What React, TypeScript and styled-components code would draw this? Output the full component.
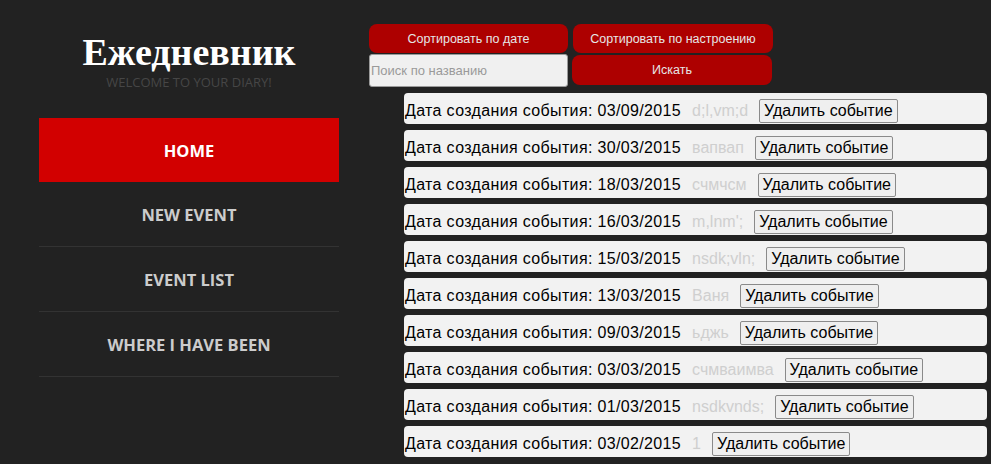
import React from "react";
import styled, { createGlobalStyle } from "styled-components";

const Global = createGlobalStyle`
  html, body { margin: 0; padding: 0; background: #222222; }
  body { font-family: "Liberation Sans", Arial, sans-serif; }
  * { box-sizing: border-box; }
`;

const Page = styled.div`
  display: flex;
  align-items: flex-start;
  width: 991px;
  min-height: 464px;
  background: #222222;
`;

const Sidebar = styled.aside`
  width: 369px;
  flex-shrink: 0;
  padding-left: 39px;
  padding-right: 30px;
`;

const Brand = styled.header`
  display: flex;
  flex-direction: column;
  align-items: center;
  padding-top: 30px;
  height: 118px;
`;

const Title = styled.h1`
  margin: 0;
  font-family: "Liberation Serif", "Times New Roman", serif;
  font-weight: bold;
  font-size: 38px;
  line-height: 44px;
  color: #ffffff;
`;

const Tagline = styled.div`
  margin-top: 1px;
  font-family: "Open Sans", sans-serif;
  font-size: 13px;
  line-height: 15px;
  color: #464646;
  text-transform: uppercase;
`;

const Nav = styled.nav`
  display: flex;
  flex-direction: column;
  width: 300px;
`;

const NavItem = styled.a<{ $active?: boolean }>`
  display: flex;
  align-items: center;
  justify-content: center;
  height: ${(p) => (p.$active ? "64px" : "65px")};
  font-family: "Open Sans", sans-serif;
  font-weight: 700;
  font-size: 16.5px;
  text-transform: uppercase;
  text-decoration: none;
  color: ${(p) => (p.$active ? "#ffffff" : "#cccccc")};
  background: ${(p) => (p.$active ? "#d20000" : "transparent")};
  border-bottom: ${(p) => (p.$active ? "none" : "1px solid #333333")};
`;

const Main = styled.main`
  flex: 1;
  padding-top: 24px;
  display: flex;
  flex-direction: column;
`;

const ControlRow = styled.div`
  display: flex;
  align-items: center;
`;

const RedButton = styled.button<{ $w: number; $h: number; $ml: number }>`
  width: ${(p) => p.$w}px;
  height: ${(p) => p.$h}px;
  margin-left: ${(p) => p.$ml}px;
  border: none;
  border-radius: 8px;
  background: #ad0000;
  color: #e6e6e6;
  font-family: "Liberation Sans", Arial, sans-serif;
  font-size: 12.5px;
  padding: 0;
`;

const SearchInput = styled.input`
  width: 199px;
  height: 33px;
  margin-top: 1px;
  padding: 0 1px;
  border: 1px solid #9a9a9a;
  border-radius: 3px;
  background: #f0f0f0;
  font-family: "Liberation Sans", Arial, sans-serif;
  font-size: 13px;
  color: #333;
  &::placeholder { color: #9a9a9a; }
`;

const List = styled.ul`
  list-style: none;
  margin: 6px 4px 0 35px;
  padding: 0;
  display: flex;
  flex-direction: column;
  gap: 6px;
`;

const EventRow = styled.li`
  display: flex;
  align-items: center;
  height: 31px;
  padding-top: 5px;
  background: #f2f2f2;
  border-radius: 4px;
  font-size: 16px;
  color: #000000;
  white-space: nowrap;
`;

const DateText = styled.span`
  padding-left: 1px;
  letter-spacing: 0.35px;
`;

const Mood = styled.span`
  color: #cfcfcf;
  margin: 0 11px;
`;

const DeleteButton = styled.button`
  height: 24px;
  padding: 0 4px;
  border: 1px solid #8a8a8a;
  border-radius: 2px;
  background: #efefef;
  font-family: "Liberation Sans", Arial, sans-serif;
  font-size: 16px;
  color: #000;
`;

const events = [
  { date: "03/09/2015", mood: "d;l,vm;d" },
  { date: "30/03/2015", mood: "вапвап" },
  { date: "18/03/2015", mood: "счмчсм" },
  { date: "16/03/2015", mood: "m,lnm';" },
  { date: "15/03/2015", mood: "nsdk;vln;" },
  { date: "13/03/2015", mood: "Ваня" },
  { date: "09/03/2015", mood: "ьджь" },
  { date: "03/03/2015", mood: "счмваимва" },
  { date: "01/03/2015", mood: "nsdkvnds;" },
  { date: "03/02/2015", mood: "1" },
];

export default function App() {
  return (
    <>
      <Global />
      <Page>
        <Sidebar>
          <Brand>
            <Title>Ежедневник</Title>
            <Tagline>Welcome to your diary!</Tagline>
          </Brand>
          <Nav>
            <NavItem $active href="#">Home</NavItem>
            <NavItem href="#">New event</NavItem>
            <NavItem href="#">Event list</NavItem>
            <NavItem href="#">Where I have been</NavItem>
          </Nav>
        </Sidebar>
        <Main>
          <ControlRow>
            <RedButton $w={199} $h={29} $ml={0}>Сортировать по дате</RedButton>
            <RedButton $w={200} $h={29} $ml={5}>Сортировать по настроению</RedButton>
          </ControlRow>
          <ControlRow>
            <SearchInput placeholder="Поиск по названию" />
            <RedButton $w={200} $h={30} $ml={4}>Искать</RedButton>
          </ControlRow>
          <List>
            {events.map((e) => (
              <EventRow key={e.date}>
                <DateText>Дата создания события: {e.date}</DateText>
                <Mood>{e.mood}</Mood>
                <DeleteButton>Удалить событие</DeleteButton>
              </EventRow>
            ))}
          </List>
        </Main>
      </Page>
    </>
  );
}
